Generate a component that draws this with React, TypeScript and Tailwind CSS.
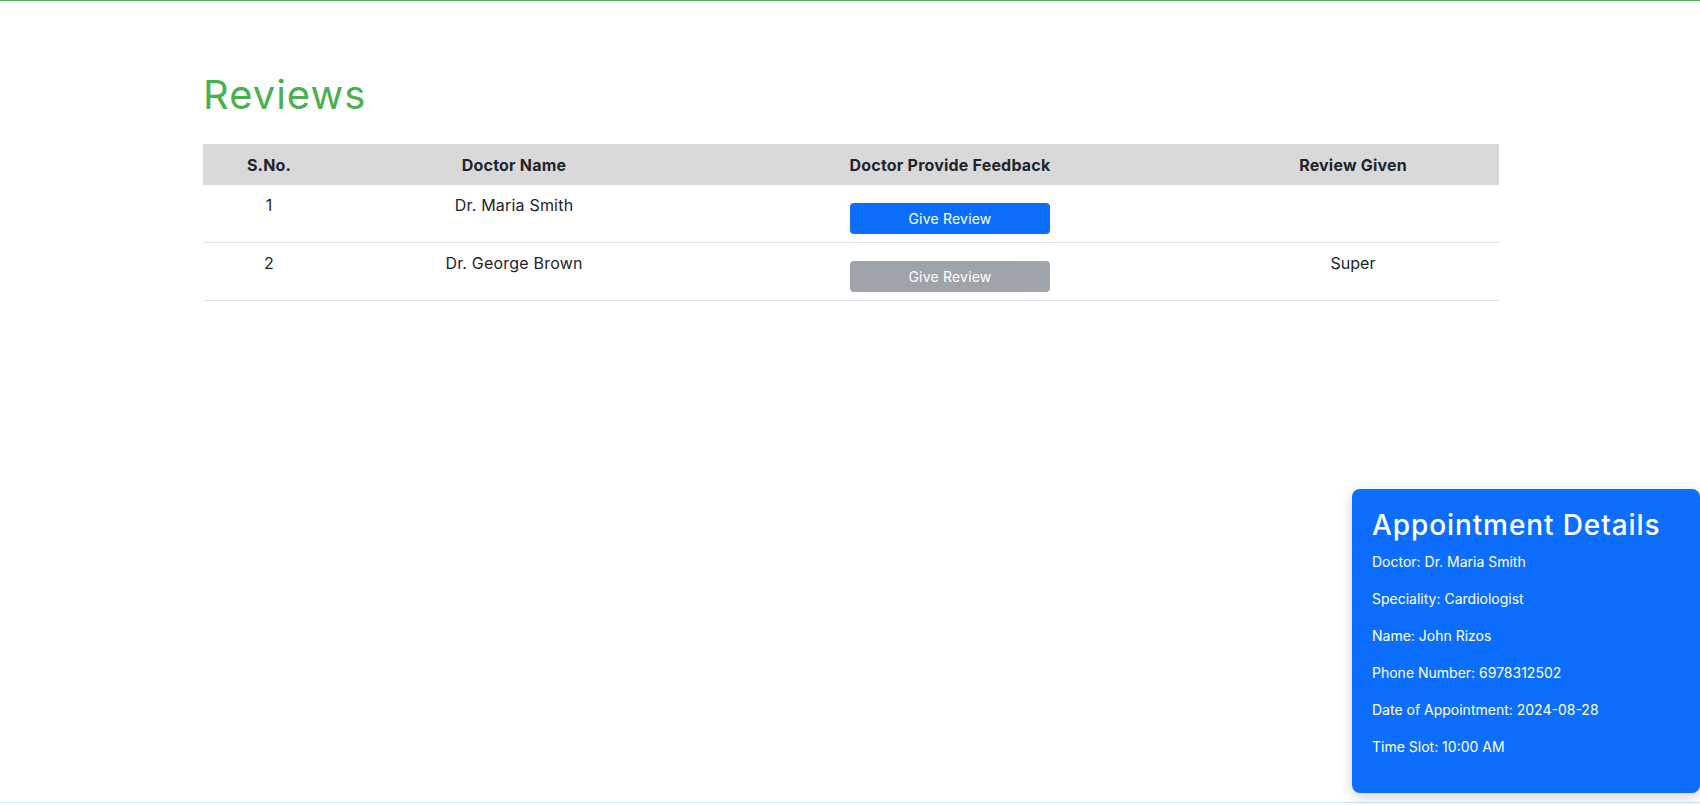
import React from "react";

const rows = [
  { id: 1, name: "Dr. Maria Smith", disabled: false, review: "" },
  { id: 2, name: "Dr. George Brown", disabled: true, review: "Super" },
];

const details = [
  "Doctor: Dr. Maria Smith",
  "Speciality: Cardiologist",
  "Name: John Rizos",
  "Phone Number: 6978312502",
  "Date of Appointment: 2024-08-28",
  "Time Slot: 10:00 AM",
];

export default function App() {
  return (
    <div className="relative flex h-[805px] flex-col bg-white font-['Inter','Noto_Sans',sans-serif] text-[#212529]">
      <div className="h-px w-full bg-[#4caf50] shadow-[0_2px_4px_rgba(0,0,0,0.06)]" />
      <main className="flex-1">
        <div className="mx-auto w-[1320px] pt-[70px] pr-[11px] pl-[13px]">
          <h1 className="mb-[25px] text-[40px] leading-[48px] font-normal tracking-[1px] text-[#4caf50]">Reviews</h1>
          <table className="w-full table-fixed border-collapse text-center text-base">
            <colgroup>
              <col className="w-[132px]" />
              <col className="w-[358px]" />
              <col className="w-[514px]" />
              <col className="w-[292px]" />
            </colgroup>
            <thead>
              <tr className="bg-[#d9d9d9]">
                <th className="h-[41px] px-2 py-2 font-bold leading-6 tracking-[0.2px]">S.No.</th>
                <th className="px-2 py-2 font-bold leading-6 tracking-[0.2px]">Doctor Name</th>
                <th className="px-2 py-2 font-bold leading-6 tracking-[0.2px]">Doctor Provide Feedback</th>
                <th className="px-2 py-2 font-bold leading-6 tracking-[0.2px]">Review Given</th>
              </tr>
            </thead>
            <tbody>
              {rows.map((r) => (
                <tr key={r.id} className="border-b border-[#dee2e6] align-top">
                  <td className="px-2 py-2 leading-6">{r.id}</td>
                  <td className="px-2 py-2 leading-6 tracking-[0.2px]">{r.name}</td>
                  <td className="px-2 py-2 leading-6">
                    <button
                      disabled={r.disabled}
                      className={
                        r.disabled
                          ? "mt-[10px] h-[31px] w-[200px] rounded-[4px] bg-[#6c757d] text-sm tracking-[0.2px] text-white opacity-65"
                          : "mt-[10px] h-[31px] w-[200px] rounded-[4px] bg-[#0d6efd] text-sm tracking-[0.2px] text-white"
                      }
                    >
                      Give Review
                    </button>
                  </td>
                  <td className="px-2 py-2 leading-6">{r.review}</td>
                </tr>
              ))}
            </tbody>
          </table>
        </div>
      </main>
      <div className="h-[3px] border-t border-[#cfe2ff]" />
      <div className="absolute right-0 bottom-[12px] w-[348px] rounded-lg bg-[#0d6efd] p-5 text-white shadow-[0_4px_14px_rgba(0,0,0,0.18)]">
        <h3 className="mb-2 text-[28px] leading-[33.6px] font-medium tracking-[0.9px]">Appointment Details</h3>
        {details.map((d) => (
          <p key={d} className="mb-4 text-sm leading-[21px]">
            {d}
          </p>
        ))}
      </div>
    </div>
  );
}
